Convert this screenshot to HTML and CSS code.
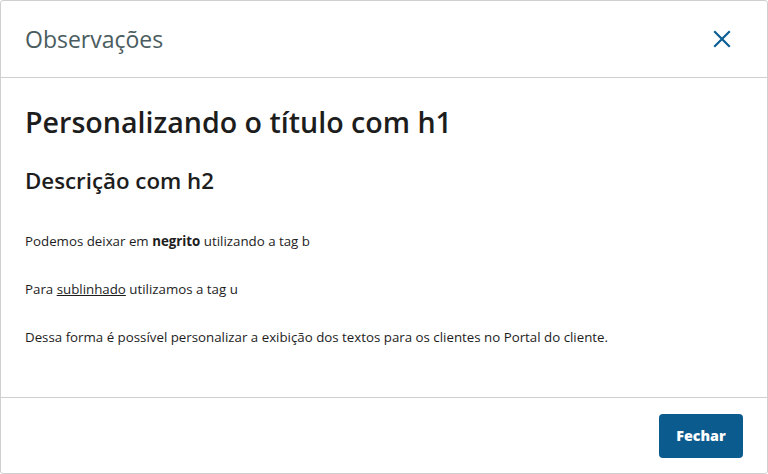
FILE: index.html
```html
<!DOCTYPE html>
<html lang="pt-BR">
<head>
<meta charset="utf-8">
<title>Observações</title>
<link rel="stylesheet" href="styles.css">
</head>
<body>
<div class="modal">
  <header class="modal-header">
    <h3 class="modal-title">Observações</h3>
    <button class="close-btn" aria-label="Fechar">
      <svg width="18" height="18" viewBox="0 0 18 18"><path d="M2 2 L16 16 M16 2 L2 16" stroke="#0c5f94" stroke-width="2.2" stroke-linecap="square" fill="none"/></svg>
    </button>
  </header>
  <main class="modal-body">
    <h1 class="h1">Personalizando o título com h1</h1>
    <h2 class="h2">Descrição com h2</h2>
    <p class="txt">Podemos deixar em <b>negrito</b> utilizando a tag b</p>
    <p class="txt">Para <u>sublinhado</u> utilizamos a tag u</p>
    <p class="txt">Dessa forma é possível personalizar a exibição dos textos para os clientes no Portal do cliente.</p>
  </main>
  <footer class="modal-footer">
    <button class="btn-primary">Fechar</button>
  </footer>
</div>
</body>
</html>
```
FILE: styles.css
```css
html, body { margin: 0; padding: 0; background: #fff; }
body { font-family: "Open Sans", Lato, sans-serif; color: #1d1d1d; }
.modal {
  box-sizing: border-box;
  width: 768px;
  height: 474px;
  border: 1px solid #cfcfcf;
  border-radius: 3px;
  display: flex;
  flex-direction: column;
}
.modal-header {
  height: 76px;
  border-bottom: 1px solid #cfcfcf;
  display: flex;
  align-items: center;
  justify-content: space-between;
  padding: 0 36px 0 24px;
}
.modal-title {
  margin: 0;
  font-size: 23px;
  font-weight: 400;
  color: #4a5c60;
}
.close-btn {
  border: 0;
  background: none;
  padding: 0;
  width: 18px;
  height: 18px;
  cursor: pointer;
  display: flex;
}
.modal-body {
  flex: 1;
  padding: 24px 24px 0 24px;
  border-bottom: 1px solid #cfcfcf;
}
.h1 {
  margin: 0;
  font-size: 28.6px;
  font-weight: 600;
  line-height: 40px;
}
.h2 {
  margin: 24px 0 0 0;
  font-size: 22.3px;
  font-weight: 600;
  line-height: 30px;
}
.txt {
  margin: 35px 0 0 0;
  font-size: 13.3px;
  line-height: 20px;
}
.txt + .txt { margin-top: 28px; }
.txt b { font-weight: 700; }
.modal-footer {
  height: 75px;
  display: flex;
  align-items: center;
  justify-content: flex-end;
  padding: 0 24px;
}
.btn-primary {
  background: #0b5b8e;
  color: #fff;
  border: 0;
  border-radius: 4px;
  width: 84px;
  height: 44px;
  font-family: "Open Sans", sans-serif;
  font-size: 14.3px;
  font-weight: 800;
  cursor: pointer;
}
```
